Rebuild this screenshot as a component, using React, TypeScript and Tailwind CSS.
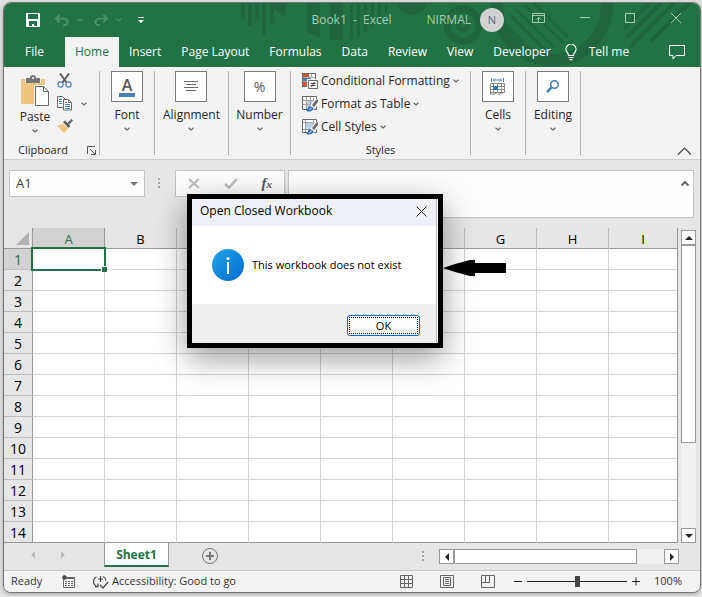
import React from 'react';

const columns = ['A', 'B', 'C', 'D', 'E', 'F', 'G', 'H', 'I'];
const rows = Array.from({ length: 14 }, (_, i) => i + 1);
const menuTabs = ['Insert', 'Page Layout', 'Formulas', 'Data', 'Review', 'View', 'Developer'];

const Chevron = ({ className = '' }: { className?: string }) => (
  <svg width="6" height="4" viewBox="0 0 6 4" fill="none" stroke="currentColor" strokeWidth="1.2" className={className}>
    <path d="M0.5 0.7L3 3L5.5 0.7" />
  </svg>
);

const Arrow = ({ points }: { points: string }) => (
  <svg width="8" height="8" viewBox="0 0 8 8" fill="currentColor">
    <polygon points={points} />
  </svg>
);

const Backdrop = () => (
  <svg className="absolute top-0 right-0" width="460" height="64" viewBox="240 3 460 64" fill="none">
    <g fill="#1f6540">
      <path d="M241 3h4v16h-4zM248 3h4v23h-4zM255 3h4v17h-4zM262 3h4v32h-4zM270 3h4v20h-4z" />
      <path d="M270 3h16v14q-9-4-16-14z" />
      <path d="M307 3h13v34q-7-2-13-5zM330 3h13v37h-13z" />
      <path d="M350 3h3v36h-3zM357 3h3v34h-3zM364 3h3v30h-3zM371 3h3v24h-3zM378 3h3v18h-3zM385 3h2v10h-2z" />
      <path d="M398 3h28a14 12 0 0 1-28 0z" />
    </g>
    <g stroke="#1f6540">
      <circle cx="463" cy="25" r="16" strokeWidth="7" />
      <circle cx="463" cy="25" r="5" strokeWidth="4" />
      <circle cx="552" cy="5" r="55" strokeWidth="12" />
      <path d="M510 15l36 36M516 9l38 38M524 5l40 38M534 3l34 34M508 27l26 26" strokeWidth="3" />
      <path d="M624 28l25-25M626 38l35-35M630 47l44-44M650 42l39-39" strokeWidth="4" />
    </g>
  </svg>
);

const PasteIcon = () => (
  <svg width="29" height="32" viewBox="0 0 29 32">
    <path d="M0 4h24v25H0z" fill="#eec67f" />
    <path d="M4 2h16v6H4z" fill="#f3f3f3" />
    <path d="M5 3h4a3 3 0 0 1 6 0h4v5H5z" fill="#767676" />
    <circle cx="12" cy="3" r="1.1" fill="#fff" />
    <path d="M13 10h16v22H13z" fill="#f3f3f3" />
    <path d="M14.5 11.5h8l5 5v14h-13z" fill="#fff" stroke="#6b6b6b" />
    <path d="M22.5 11.5v5h5" fill="none" stroke="#6b6b6b" />
  </svg>
);

const CutIcon = () => (
  <svg width="15" height="15" viewBox="0 0 15 15" fill="none">
    <path d="M3 0.5L9.5 9.5M12 0.5L5.5 9.5" stroke="#5f5f5f" strokeWidth="2" />
    <circle cx="3.5" cy="11.5" r="2.6" stroke="#4a7fb8" strokeWidth="1.2" />
    <circle cx="11.5" cy="11.5" r="2.6" stroke="#4a7fb8" strokeWidth="1.2" />
  </svg>
);

const CopyIcon = () => (
  <svg width="16" height="15" viewBox="0 0 16 15" fill="#fff" stroke="#6b6b6b">
    <path d="M0.5 0.5h5l3 3v8h-8z" />
    <path d="M6.5 3.500h5l3 3v7.500h-8z" />
    <path d="M11.5 3.500v3h3" fill="none" />
    <path d="M2 3.500h3M2 5.500h3M2 7.500h3M8 8.500h5M8 10.500h5M8 6.500h2M8 12.500h5" stroke="#4a7fb8" />
  </svg>
);

const BrushIcon = () => (
  <svg width="16" height="14" viewBox="0 0 16 14">
    <path d="M0 7l6-2.500 5 5L7 14z" fill="#eec67f" />
    <path d="M6 3l2-1.500 5.500 5.500-2 2z" fill="#5f5f5f" />
    <path d="M10 4l4.500-4L16 1.500 12 6z" fill="#6b6b6b" />
  </svg>
);

const ConditionalIcon = () => (
  <svg width="16" height="16" viewBox="0 0 16 16">
    <path d="M0 0h14v14H0z" fill="#6b6b6b" />
    <path d="M1 1h12v12H1z" fill="#fff" />
    <path d="M1 1h6v3H1zM1 9h5v4H1z" fill="#d35230" />
    <path d="M1 5h8v3H1z" fill="#4a7fb8" />
    <path d="M9.5 1v3M1 4.500h12M1 8.500h5" stroke="#a8a8a8" />
    <path d="M5 6h11v10H5z" fill="#f3f3f3" />
    <path d="M6.500 7.500h9v8h-9z" fill="#fff" stroke="#6b6b6b" />
    <path d="M8.500 10.500h5M8.500 12.500h5M12.500 9L9.500 14" stroke="#444" fill="none" />
  </svg>
);

const TableIcon = ({ plain }: { plain?: boolean }) => (
  <svg width="16" height="16" viewBox="0 0 16 16">
    <path d="M0.500 0.500h14v13h-14z" fill="#fff" stroke="#6b6b6b" />
    <path d={plain ? 'M4 4h8v6H4z' : 'M5 5h9v8H5z'} fill="#b8cde5" />
    <path d={plain ? 'M3.500 1v12M11.500 1v12M1 3.500h13M1 10.500h13' : 'M4.500 1v12M8.500 1v12M11.500 1v12M1 4.500h13M1 8.500h13'} stroke="#a0a0a0" fill="none" />
    <path d="M8 10l5-7h3v6l-5 5z" fill="#f3f3f3" />
    <path d="M10 9l4-5 2-1v3l-4 5z" fill="#6b6b6b" />
    <path d="M4 15c2-1 1.500-4 4-5l3.500 2c0 3-3.500 4.500-7.500 3z" fill="#2f75b5" />
    <path d="M7.500 13.500l2-1.500" stroke="#fff" />
  </svg>
);

const CellsIcon = () => (
  <svg width="16" height="17" viewBox="0 0 16 17" fill="none">
    <path d="M1.500 0v4M13.500 0v4M3 2h9M5 0.500L3.500 2 5 3.500M10 0.500L11.500 2 10 3.500" stroke="#4a7fb8" />
    <path d="M0.500 5.500h14v9h-14zM3.500 5v10M7.500 5v10M11.500 5v10M0 8.500h15M0 11.500h15" stroke="#8a8a8a" />
    <path d="M3 8h5v4H3z" fill="#2f75b5" />
    <path d="M0.500 14v2h4l2-1M8 16h3l2-1.500" stroke="#7a7a7a" />
  </svg>
);

const SearchIcon = () => (
  <svg width="14" height="13" viewBox="0 0 14 13" fill="none" stroke="#4a7fb8">
    <circle cx="8.500" cy="4.500" r="3.800" strokeWidth="1.600" />
    <path d="M5.500 7.500L1 12" strokeWidth="2.600" />
  </svg>
);

const Grip = () => (
  <div className="flex w-1 flex-col gap-[2px]">
    <i className="size-[2px] bg-[#a6a6a6]" />
    <i className="size-[2px] bg-[#a6a6a6]" />
    <i className="size-[2px] bg-[#a6a6a6]" />
  </div>
);

const BigTool = ({ label, width, children }: { label: string; width: string; children: React.ReactNode }) => (
  <div className={`${width} flex shrink-0 justify-center border-r border-[#b4b4b4]`}>
    <button className="flex flex-col items-center">
      <span className="flex h-[31px] w-8 items-center justify-center border border-[#7a7a7a] bg-white">{children}</span>
      <span className="mt-[5px] h-4 leading-4">{label}</span>
      <Chevron className="mt-1 text-[#666]" />
    </button>
  </div>
);

const TitleBar = () => (
  <div className="relative flex h-[34px] items-center text-[#a3cdb3]">
    <button aria-label="Save" className="ml-[22px] text-white">
      <svg width="14" height="14" viewBox="0 0 14 14">
        <path d="M0 0h14v14H0z" fill="currentColor" />
        <path d="M2 1h10v5H2zM3 8h8v5H8v-2H6v2H3z" fill="#217346" />
      </svg>
    </button>
    <button aria-label="Undo" className="ml-[15px] flex items-center gap-2 text-[#4d9169]">
      <svg width="14" height="13" viewBox="0 0 15 13" fill="none" stroke="currentColor" strokeWidth="2">
        <path d="M5 0.500L1 4.500L5 8.500M1.500 4.500H9.500Q13.500 5 13.500 8.500Q13 11.500 8.500 12" />
      </svg>
      <Chevron />
    </button>
    <button aria-label="Redo" className="ml-[11px] flex items-center gap-2 text-[#4d9169]">
      <svg width="14" height="13" viewBox="0 0 15 13" fill="none" stroke="currentColor" strokeWidth="2">
        <path d="M10 0.500L14 4.500L10 8.500M13.500 4.500H5.500Q1.500 5 1.500 8.500Q2 11.500 6.500 12" />
      </svg>
      <Chevron />
    </button>
    <button aria-label="Customize Quick Access Toolbar" className="ml-4 text-white">
      <svg width="6" height="6" viewBox="0 0 6 6" fill="currentColor">
        <path d="M0 0h6v1H0zM0 3h6L3 6z" />
      </svg>
    </button>
    <span className="ml-auto whitespace-pre">Book1  -  Excel</span>
    <span className="ml-[35px]">NIRMAL</span>
    <button aria-label="Account" className="ml-[9px] size-6 rounded-full bg-[#d2d2d2] text-[11px] leading-6 text-[#5b6b84]">N</button>
    <div className="mb-1 ml-[28px] mr-[19px] flex items-center justify-between gap-[35px]">
      <button aria-label="Ribbon Display Options">
        <svg width="13" height="10" viewBox="0 0 13 10" fill="none" stroke="currentColor">
          <path d="M0.500 0.500h12v9h-12zM0 2.500h13M6.500 9V4.500M4.500 6.500l2-2 2 2" />
        </svg>
      </button>
      <button aria-label="Minimize">
        <svg width="10" height="10" viewBox="0 0 10 10" stroke="currentColor"><path d="M0 4.500h10" /></svg>
      </button>
      <button aria-label="Maximize">
        <svg width="11" height="10" viewBox="0 0 11 10" fill="none" stroke="currentColor"><path d="M0.500 0.500h9v9h-9z" /></svg>
      </button>
      <button aria-label="Close">
        <svg width="10" height="10" viewBox="0 0 10 10" stroke="currentColor"><path d="M0 0l10 10M10 0L0 10" /></svg>
      </button>
    </div>
  </div>
);

const MenuBar = () => (
  <nav className="relative flex h-[30px] items-stretch text-white">
    <button className="px-[21px]">File</button>
    <button className="bg-[#f3f3f3] px-[10px] text-[#217346]">Home</button>
    {menuTabs.map((tab) => (
      <button key={tab} className="px-[10px] whitespace-nowrap">{tab}</button>
    ))}
    <button className="ml-1 flex items-center gap-3 whitespace-nowrap">
      <svg width="12" height="17" viewBox="0 0 12 17" fill="none" stroke="currentColor" strokeWidth="1.200">
        <path d="M3.500 11.500Q3.500 9.500 2 8.200A5 5 0 1 1 10 8.200Q8.500 9.500 8.500 11.500zM3.500 13.500h5M4.500 15.700h3" />
      </svg>
      Tell me
    </button>
    <button aria-label="Comments" className="ml-auto mr-[15px]">
      <svg width="16" height="15" viewBox="0 0 16 15" fill="none" stroke="currentColor">
        <path d="M0.500 0.500h15v10H7l-3 3.500v-3.500H0.500z" />
      </svg>
    </button>
  </nav>
);

const Ribbon = () => (
  <div className="flex h-[93px] border-b border-[#cfcfcf] bg-[#f3f3f3] py-1">
    <div className="flex w-24 shrink-0 flex-col justify-between border-r border-[#b4b4b4]">
      <div className="flex gap-2 pl-[17px]">
        <button className="flex w-7 flex-col items-center pt-1">
          <PasteIcon />
          <span className="mt-[2px] h-4 leading-4">Paste</span>
          <Chevron className="mt-1 text-[#666]" />
        </button>
        <div className="flex flex-col items-start gap-2 pt-[2px]">
          <button aria-label="Cut"><CutIcon /></button>
          <button aria-label="Copy" className="flex items-center gap-2 text-[#666]"><CopyIcon /><Chevron /></button>
          <button aria-label="Format Painter"><BrushIcon /></button>
        </div>
      </div>
      <div className="flex h-[10px] items-center justify-between pr-[3px] pl-[14px] text-[11px] leading-[10px]">
        Clipboard
        <button aria-label="Clipboard settings">
          <svg width="9" height="9" viewBox="0 0 9 9" fill="none" stroke="#555"><path d="M0.500 8V0.500H8M3 3l5 5M8.500 4v4.500H4" /></svg>
        </button>
      </div>
    </div>
    <BigTool label="Font" width="w-[55px]">
      <span className="w-4 border-b-4 border-[#4a7fb8] text-center text-[16px] leading-4 font-semibold text-[#555]">A</span>
    </BigTool>
    <BigTool label="Alignment" width="w-[74px]">
      <svg width="14" height="12" viewBox="0 0 14 12" stroke="#6b6b6b"><path d="M0 .5h14M2 3.500h10M0 6.500h14M2 9.500h10" /></svg>
    </BigTool>
    <BigTool label="Number" width="w-[62px]">
      <span className="text-[14px] text-[#555]">%</span>
    </BigTool>
    <div className="flex w-[180px] shrink-0 flex-col justify-between border-r border-[#b4b4b4]">
      <div className="flex flex-col items-start gap-[7px] pt-[2px] pl-[11px] leading-4 whitespace-nowrap">
        <button className="flex h-4 items-center gap-[3px]"><ConditionalIcon />Conditional Formatting<Chevron className="text-[#666]" /></button>
        <button className="flex h-4 items-center gap-[3px]"><TableIcon />Format as Table<Chevron className="text-[#666]" /></button>
        <button className="flex h-4 items-center gap-[3px]"><TableIcon plain />Cell Styles<Chevron className="text-[#666]" /></button>
      </div>
      <span className="text-center text-[11px] leading-[10px]">Styles</span>
    </div>
    <BigTool label="Cells" width="w-[55px]"><CellsIcon /></BigTool>
    <BigTool label="Editing" width="w-[55px]"><SearchIcon /></BigTool>
    <button aria-label="Collapse the Ribbon" className="mt-auto mr-2 ml-auto">
      <svg width="15" height="8" viewBox="0 0 15 8" fill="none" stroke="#444" strokeWidth="1.200"><path d="M1 7.500L7.500 1L14 7.500" /></svg>
    </button>
  </div>
);

const FormulaBar = () => (
  <div className="flex items-start pt-[10px] pr-[6px] pb-[10px] pl-[5px]">
    <div className="flex h-[27px] w-[136px] items-center border border-[#c3c3c3] bg-[#fdfdfd] px-[6px]">
      <input aria-label="Name Box" defaultValue="A1" className="min-w-0 flex-1 text-[13px] text-[#444] outline-none" />
      <button aria-label="Name list" className="text-[#777]"><Arrow points="0,2 8,2 4,6" /></button>
    </div>
    <div className="mt-2 ml-[13px]"><Grip /></div>
    <div className="ml-[13px] flex h-[27px] w-[110px] items-center justify-between border border-[#c3c3c3] bg-[#fdfdfd] px-3 text-[#bdbdbd]">
      <button aria-label="Cancel">
        <svg width="12" height="11" viewBox="0 0 12 11" stroke="currentColor" strokeWidth="2"><path d="M1 1l10 9M11 1L1 10" /></svg>
      </button>
      <button aria-label="Enter">
        <svg width="14" height="11" viewBox="0 0 14 11" fill="none" stroke="currentColor" strokeWidth="2.500"><path d="M1 6l4 3.500L13 1" /></svg>
      </button>
      <button aria-label="Insert Function" className="font-['Liberation_Serif',serif] text-[15px] leading-4 font-bold text-[#555] italic">
        f<span className="text-[11px]">x</span>
      </button>
    </div>
    <div className="ml-[3px] flex h-12 flex-1 items-start border border-[#c3c3c3] bg-[#fdfdfd]">
      <textarea aria-label="Formula Bar" className="h-full min-w-0 flex-1 resize-none outline-none" />
      <button aria-label="Collapse Formula Bar" className="mt-[10px] mr-1">
        <svg width="8" height="5" viewBox="0 0 8 5" fill="none" stroke="#666" strokeWidth="2"><path d="M0.500 4.500L4 1L7.500 4.500" /></svg>
      </button>
    </div>
  </div>
);

const Sheet = () => (
  <div className="flex">
    <table className="w-full flex-1 table-fixed border-separate border-spacing-0 border-r border-[#999] text-black">
      <colgroup>
        <col className="w-[29px]" />
        {columns.slice(0, 8).map((c) => <col key={c} className="w-[72px]" />)}
        <col />
      </colgroup>
      <thead>
        <tr className="h-[21px]">
          <th className="border-r border-b border-[#999] bg-[#e6e6e6] p-0 align-bottom">
            <svg width="13" height="13" viewBox="0 0 13 13" className="mb-[3px] ml-3" fill="#b2b2b2"><path d="M13 0v13H0z" /></svg>
          </th>
          {columns.map((c) => (
            <th
              key={c}
              className={`border-b px-0 pt-[2px] pb-0 text-[13px] leading-[18px] font-normal ${
                c === 'A' ? 'border-r border-[#999] bg-[#d2d2d2] text-[#217346]' : c === 'I' ? 'border-[#999]' : 'border-r border-[#999] border-r-[#bdbdbd]'
              }`}
            >
              {c}
            </th>
          ))}
        </tr>
      </thead>
      <tbody>
        {rows.map((r) => (
          <tr key={r} className="h-[21px]">
            <th
              className={`border-r border-b border-[#999] px-0 pt-[2px] pb-0 text-[14px] leading-[18px] font-normal ${
                r === 14 ? '' : 'border-b-[#bdbdbd]'
              } ${r === 1 ? 'bg-[#d2d2d2] text-[#217346]' : 'bg-[#e6e6e6]'}`}
            >
              {r}
            </th>
            {columns.map((c) => (
              <td key={c} className={`relative border-b bg-white p-0 ${r === 14 ? 'border-[#999]' : 'border-[#d4d4d4]'} ${c === 'I' ? '' : 'border-r border-r-[#d4d4d4]'}`}>
                {c === 'A' && r === 1 && (
                  <span className="absolute -inset-x-[2px] -inset-y-[2px] z-10 border-2 border-[#217346]">
                    <span className="absolute -right-[3px] -bottom-[3px] size-[6px] border-t border-l border-white bg-[#217346]" />
                  </span>
                )}
              </td>
            ))}
          </tr>
        ))}
      </tbody>
    </table>
    <div className="mt-[2px] mr-1 ml-[3px] flex w-[15px] flex-col bg-[#f1f1f1]">
      <button aria-label="Scroll up" className="flex h-[15px] items-center justify-center border border-[#999] bg-white"><Arrow points="0,6 8,6 4,2" /></button>
      <div className="h-[198px] border border-[#999] bg-white" />
      <button aria-label="Scroll down" className="mt-auto flex h-[15px] items-center justify-center border border-[#999] bg-white"><Arrow points="0,2 8,2 4,6" /></button>
    </div>
  </div>
);

const SheetTabs = () => (
  <div className="flex h-7 items-start border-b border-[#c6c6c6]">
    <div className="flex w-[100px] gap-5 pt-2 pl-[26px] text-[#bdbdbd]">
      <button aria-label="Previous sheet"><Arrow points="5,0 5,8 1,4" /></button>
      <button aria-label="Next sheet"><Arrow points="3,0 3,8 7,4" /></button>
    </div>
    <button className="h-6 w-[65px] border-r border-b-2 border-l border-x-[#999] border-b-[#217346] bg-white pt-[2px] text-[12px] font-bold text-[#217346]">Sheet1</button>
    <button aria-label="New sheet" className="mt-1 ml-8">
      <svg width="18" height="18" viewBox="0 0 18 18" fill="none" stroke="#777">
        <circle cx="9" cy="9" r="7.500" />
        <path d="M5 9h8M9 5v8" strokeWidth="2" />
      </svg>
    </button>
    <div className="mt-2 ml-auto"><Grip /></div>
    <div className="mt-[6px] mr-[21px] ml-[13px] flex h-[15px] w-[240px] bg-[#f1f1f1]">
      <button aria-label="Scroll left" className="flex w-[15px] items-center justify-center border border-[#999] bg-white"><Arrow points="6,0 6,8 2,4" /></button>
      <div className="w-[183px] border border-[#999] bg-white" />
      <button aria-label="Scroll right" className="ml-auto flex w-[15px] items-center justify-center border border-[#999] bg-white"><Arrow points="2,0 2,8 6,4" /></button>
    </div>
  </div>
);

const StatusBar = () => (
  <footer className="flex h-[21px] items-center bg-[#f3f3f3] pl-[7px] text-[11px] text-[#333]">
    <span className="w-[51px]">Ready</span>
    <button aria-label="Record Macro">
      <svg width="13" height="13" viewBox="0 0 13 13" fill="none" stroke="#666">
        <path d="M1.500 3.500h11v9h-11zM5 2.500h8M3 6.500h2M6 6.500h2M9 6.500h2M3 8.500h2M6 8.500h2M9 8.500h2M3 10.500h2M6 10.500h2M9 10.500h2" />
        <circle cx="2.500" cy="2.500" r="2" fill="#444" />
      </svg>
    </button>
    <button className="ml-[18px] flex items-center gap-[3px] whitespace-nowrap">
      <svg width="16" height="14" viewBox="0 0 16 14" fill="none" stroke="#444" strokeWidth="1.200">
        <path d="M3.500 2A5 5 0 0 0 4.500 11.500M2 11.700h3V8.500M7.500 1v6M5 4h5M10 1.500q2.500 1 3 4M7 10l3 3 5-6" />
      </svg>
      Accessibility: Good to go
    </button>
    <div className="ml-auto flex items-center gap-[27px]">
      <button aria-label="Normal">
        <svg width="13" height="13" viewBox="0 0 13 13" fill="none" stroke="#666"><path d="M0.500 0.500h12v12h-12zM4.500 0v13M8.500 0v13M0 4.500h13M0 8.500h13" /></svg>
      </button>
      <button aria-label="Page Layout view">
        <svg width="14" height="13" viewBox="0 0 14 13" fill="none" stroke="#666"><path d="M0.500 0.500h13v12h-13zM3.500 2.500h7v8h-7zM5 4.500h4M5 6.500h4M5 8.500h4" /></svg>
      </button>
      <button aria-label="Page Break Preview">
        <svg width="14" height="13" viewBox="0 0 14 13" fill="none" stroke="#666"><path d="M0.500 0.500h13v12h-13zM4.500 0v7.500M8.500 0v7.500M0 7.500h9" /></svg>
      </button>
    </div>
    <button aria-label="Zoom out" className="ml-[19px]"><svg width="8" height="9" viewBox="0 0 8 9" stroke="#222"><path d="M0 4.500h8" /></svg></button>
    <input
      type="range"
      aria-label="Zoom"
      defaultValue={50}
      className="mx-[5px] h-3 w-[100px] appearance-none bg-transparent [&::-webkit-slider-runnable-track]:h-px [&::-webkit-slider-runnable-track]:bg-[#222] [&::-webkit-slider-thumb]:-mt-[5px] [&::-webkit-slider-thumb]:h-[11px] [&::-webkit-slider-thumb]:w-[5px] [&::-webkit-slider-thumb]:appearance-none [&::-webkit-slider-thumb]:bg-[#444]"
    />
    <button aria-label="Zoom in"><svg width="8" height="9" viewBox="0 0 8 9" stroke="#222"><path d="M0 4.500h8M4 .5v8" /></svg></button>
    <span className="mr-[18px] ml-[14px]">100%</span>
  </footer>
);

const MessageBox = () => (
  <div role="dialog" aria-labelledby="msg-title" className="absolute top-[194px] left-[187px] z-20 w-64 border-[5px] border-black bg-white text-black shadow-[0_10px_30px_rgba(0,0,0,0.4)]">
    <div className="mr-[1px] border-r border-[#bbb]">
      <div className="flex h-[27px] items-center justify-between bg-[#f0f1f8] pr-[9px] pb-[3px] pl-2">
        <span id="msg-title">Open Closed Workbook</span>
        <button aria-label="Close message">
          <svg width="11" height="11" viewBox="0 0 11 11" stroke="#222"><path d="M0.500 0.500l10 10M10.500 0.500l-10 10" /></svg>
        </button>
      </div>
      <div className="flex h-[78px] items-center gap-2 pl-5">
        <svg width="32" height="32" viewBox="0 0 32 32">
          <defs>
            <linearGradient id="info" x1="0" y1="0" x2="1" y2="1">
              <stop offset="0" stopColor="#22a5e6" />
              <stop offset="1" stopColor="#006ccf" />
            </linearGradient>
          </defs>
          <circle cx="16" cy="16" r="16" fill="url(#info)" />
          <circle cx="16" cy="9.500" r="1.500" fill="#fff" />
          <path d="M15 13h2v12h-2z" fill="#fff" />
        </svg>
        <span className="text-[11px]">This workbook does not exist</span>
      </div>
      <div className="flex h-[39px] items-center justify-end bg-[#efefef] pt-1 pr-4">
        <button className="h-[21px] w-[73px] rounded-[3px] border border-[#0067c0] bg-[#fdfdfd] p-px text-[11px]">
          <span className="block border border-dotted border-black leading-[15px]">OK</span>
        </button>
      </div>
    </div>
    <svg className="absolute top-[61px] left-[251px]" width="63" height="16" viewBox="0 0 63 16">
      <path d="M0 8l12-4 15-4h5v3h31v10H32v3h-5l-15-4z" fill="#000" />
    </svg>
  </div>
);

export default function App() {
  return (
    <div className="relative min-h-screen bg-[#e3e3e3] pt-[2px] pr-px pb-1 pl-[3px] font-['Open_Sans','Noto_Sans',sans-serif] text-[12px] text-[#262626]">
      <div className="overflow-hidden rounded-lg border border-[#777] bg-[#e6e6e6] shadow-[0_1px_4px_rgba(0,0,0,0.3)]">
        <header className="relative overflow-hidden bg-[#217346]">
          <Backdrop />
          <TitleBar />
          <MenuBar />
        </header>
        <Ribbon />
        <FormulaBar />
        <Sheet />
        <SheetTabs />
        <StatusBar />
      </div>
      <MessageBox />
    </div>
  );
}
